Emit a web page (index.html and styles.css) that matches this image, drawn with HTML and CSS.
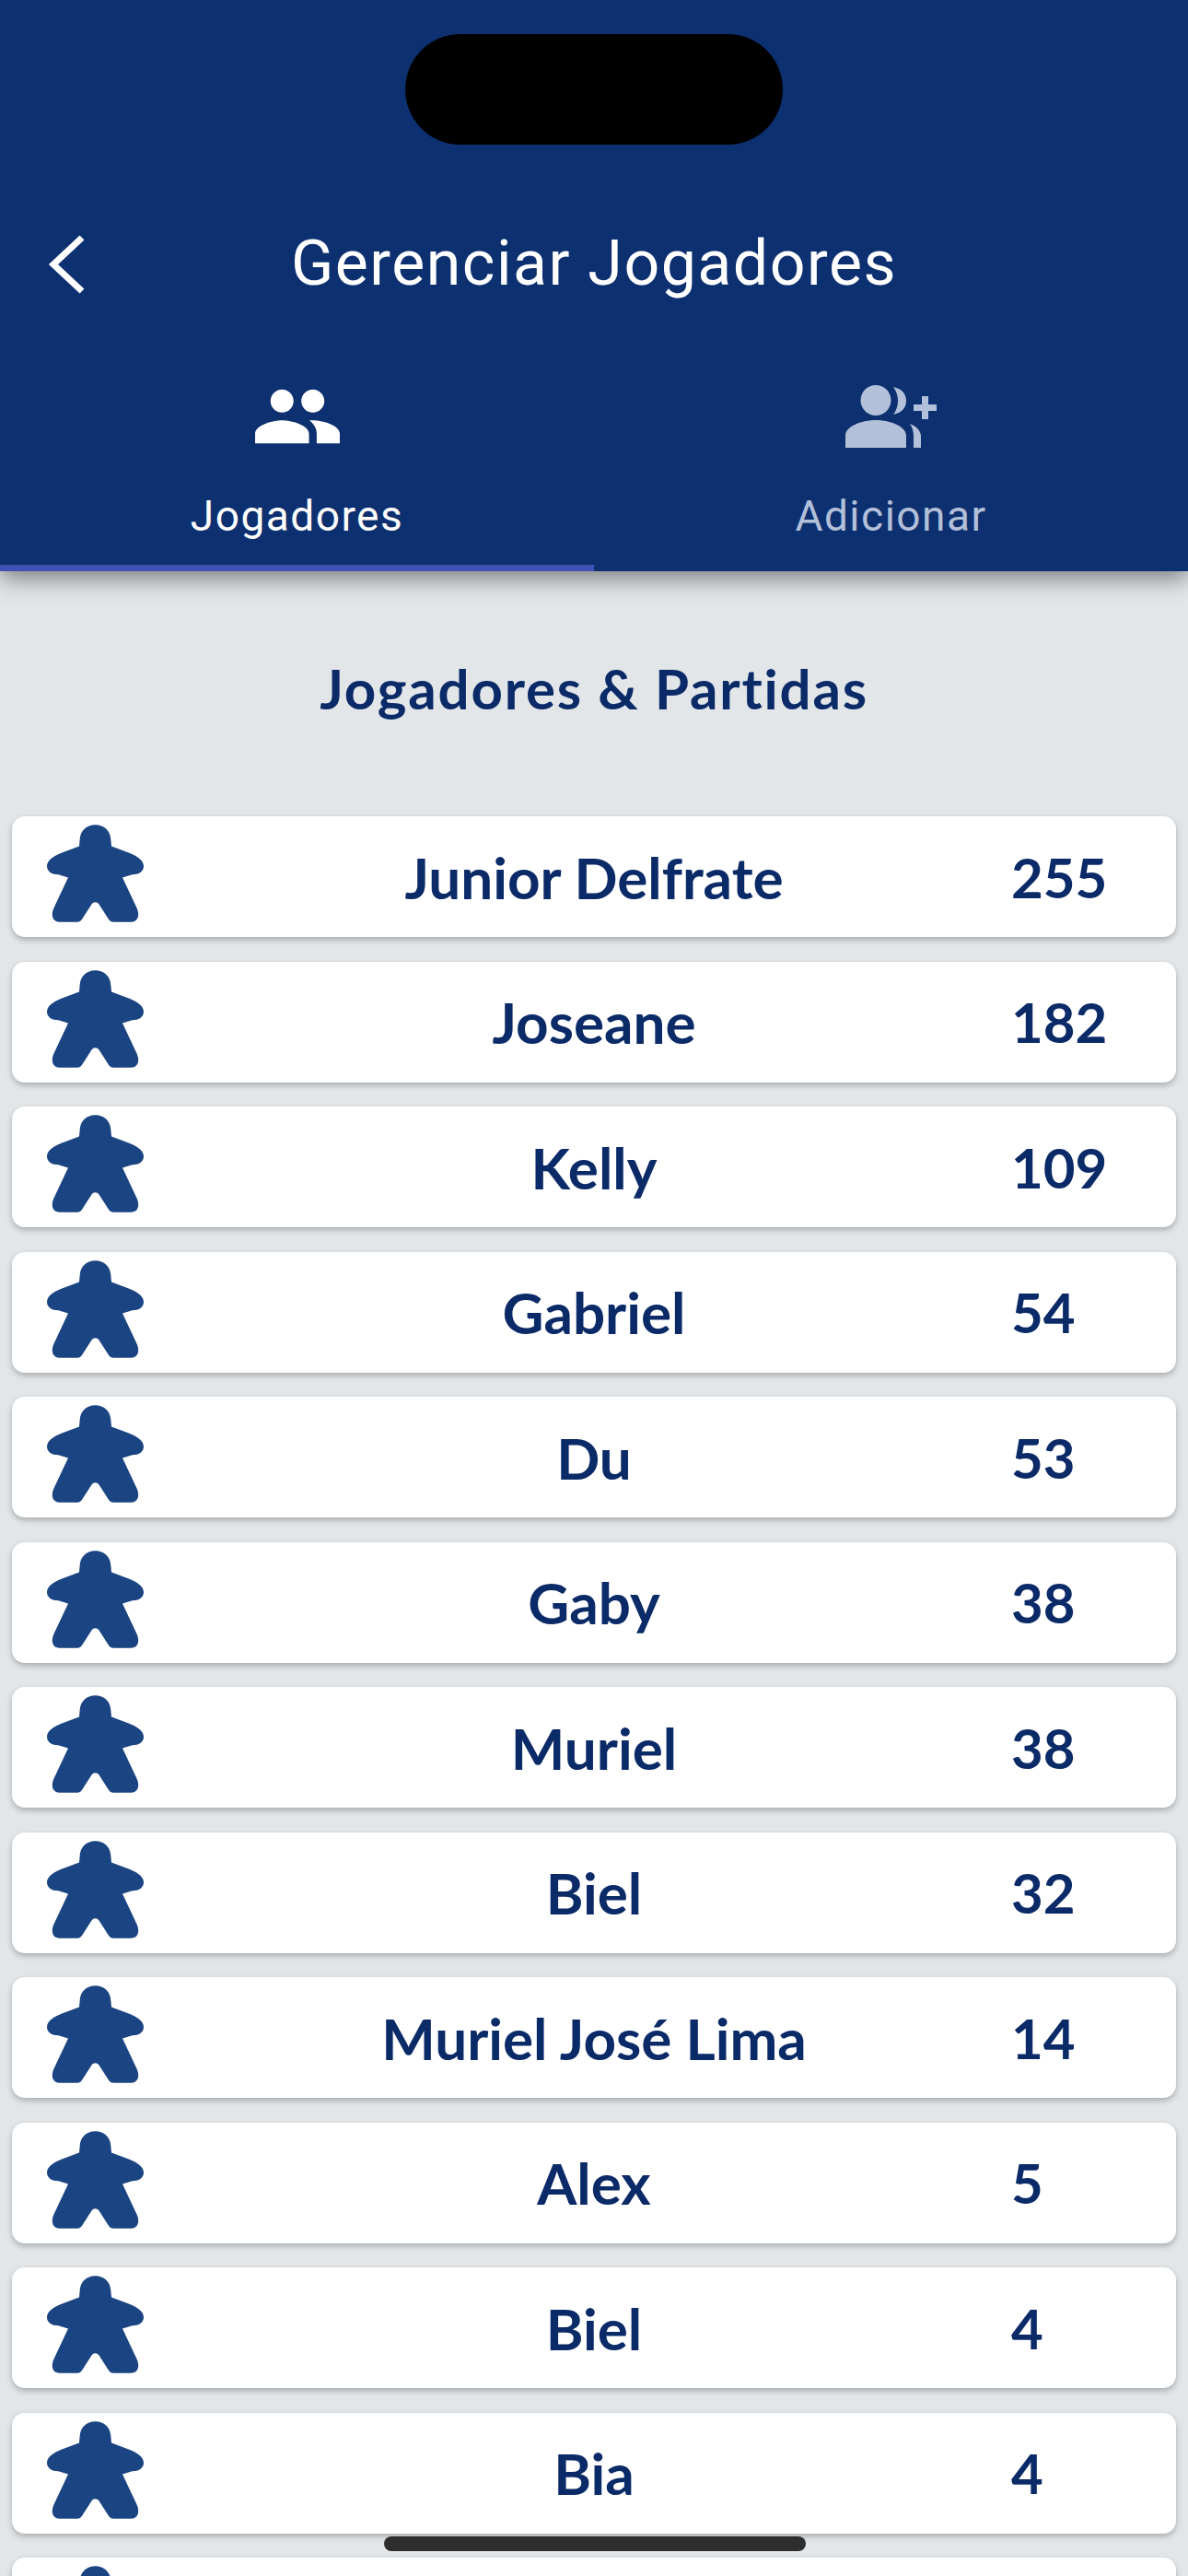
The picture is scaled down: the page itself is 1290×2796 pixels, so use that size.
FILE: index.html
```html
<!DOCTYPE html>
<html lang="pt-BR">
<head>
  <meta charset="UTF-8">
  <meta name="viewport" content="width=device-width, initial-scale=1.0">
  <title>Gerenciar Jogadores</title>
  <link rel="stylesheet" href="styles.css">
</head>
<body>
  <svg class="defs" width="0" height="0">
    <symbol id="meeple" viewBox="0 0 315 317">
      <path d="M157.5 0C129 0 108 20 107 48L105 70 47 92C18 103 0 118 0 135 0 152 16 162 37 162L69 172 22 272C12 295 18 317 42 317H97C108 317 113 311 118 302L146 258C151 250 164 250 169 258L197 302C202 311 207 317 218 317H273C297 317 303 295 293 272L246 172 278 162C299 162 315 152 315 135 315 118 297 103 268 92L210 70 208 48C207 20 186 0 157.5 0Z"/>
    </symbol>
  </svg>

  <header class="topbar">
    <div class="island"></div>
    <div class="nav">
      <svg class="back" viewBox="0 0 44 64"><path d="M40 3 9 32l31 29"/></svg>
      <h1>Gerenciar Jogadores</h1>
    </div>
    <div class="tabs">
      <div class="tab active">
        <svg viewBox="0.05 3.87 23.9 16.27"><path d="M16 11c1.66 0 2.99-1.34 2.99-3S17.66 5 16 5c-1.66 0-3 1.34-3 3s1.34 3 3 3zm-8 0c1.66 0 2.99-1.34 2.99-3S9.66 5 8 5C6.34 5 5 6.34 5 8s1.34 3 3 3zm0 2c-2.33 0-7 1.17-7 3.5V19h14v-2.500c0-2.33-4.67-3.5-7-3.5zm8 0c-.29 0-.62.02-.97.05 1.16.84 1.97 1.97 1.97 3.45V19h6v-2.5c0-2.33-4.67-3.5-7-3.5z"/></svg>
        <span>Jogadores</span>
      </div>
      <div class="tab">
        <svg viewBox="0 0 100 68"><path d="M33 0a16.500 16.500 0 1 1 0 33 16.500 16.500 0 0 1 0-33zM52 2c9 2 14 7 14 15s-5 13-14 15c3-4 5-9 5-15S55 6 52 2zM33 38c14 0 33 6 33 17v13H0V55c0-11 19-17 33-17zM70 42c8 3 12 8 12 14v12H74V56c0-5-1-10-4-14zM83 12h7v9h9v7h-9v9h-7v-9h-9v-7h9z"/></svg>
        <span>Adicionar</span>
      </div>
    </div>
  </header>

  <main class="content">
    <h2>Jogadores &amp; Partidas</h2>
    <ul class="players">
      <li class="player"><svg class="meeple"><use href="#meeple"/></svg><span class="name">Junior Delfrate</span><span class="count">255</span></li>
      <li class="player"><svg class="meeple"><use href="#meeple"/></svg><span class="name">Joseane</span><span class="count">182</span></li>
      <li class="player"><svg class="meeple"><use href="#meeple"/></svg><span class="name">Kelly</span><span class="count">109</span></li>
      <li class="player"><svg class="meeple"><use href="#meeple"/></svg><span class="name">Gabriel</span><span class="count">54</span></li>
      <li class="player"><svg class="meeple"><use href="#meeple"/></svg><span class="name">Du</span><span class="count">53</span></li>
      <li class="player"><svg class="meeple"><use href="#meeple"/></svg><span class="name">Gaby</span><span class="count">38</span></li>
      <li class="player"><svg class="meeple"><use href="#meeple"/></svg><span class="name">Muriel</span><span class="count">38</span></li>
      <li class="player"><svg class="meeple"><use href="#meeple"/></svg><span class="name">Biel</span><span class="count">32</span></li>
      <li class="player"><svg class="meeple"><use href="#meeple"/></svg><span class="name">Muriel José Lima</span><span class="count">14</span></li>
      <li class="player"><svg class="meeple"><use href="#meeple"/></svg><span class="name">Alex</span><span class="count">5</span></li>
      <li class="player"><svg class="meeple"><use href="#meeple"/></svg><span class="name">Biel</span><span class="count">4</span></li>
      <li class="player"><svg class="meeple"><use href="#meeple"/></svg><span class="name">Bia</span><span class="count">4</span></li>
      <li class="player"><svg class="meeple"><use href="#meeple"/></svg></li>
    </ul>
  </main>

  <div class="home-bar"></div>
</body>
</html>
```
FILE: styles.css
```css
html, body {
  height: 2796px;
  margin: 0;
  overflow: hidden;
}
body {
  position: relative;
  background: #e2e6e9;
  font-family: 'Lato', sans-serif;
  color: #0b2a68;
}
.defs {
  position: absolute;
}
.island {
  position: absolute;
  top: 37px;
  left: 440px;
  width: 410px;
  height: 120px;
  background: #000;
  border-radius: 60px;
}
.home-bar {
  position: absolute;
  top: 2753px;
  left: 417px;
  width: 458px;
  height: 16px;
  background: #2e2e2e;
  border-radius: 8px;
}
.topbar {
  position: relative;
  height: 620px;
  box-sizing: border-box;
  padding-top: 220px;
  background: #0d3070;
  box-shadow: 0 8px 24px rgba(0, 0, 0, 0.45);
}
.nav {
  position: relative;
  height: 132px;
  display: flex;
  align-items: center;
  justify-content: center;
}
.back {
  position: absolute;
  left: 49px;
  top: 35px;
  width: 44px;
  height: 64px;
  fill: none;
  stroke: #fff;
  stroke-width: 7;
}
.nav h1 {
  margin: 0;
  font-family: 'Roboto', sans-serif;
  font-size: 68px;
  font-weight: 400;
  letter-spacing: 1.5px;
  color: #fff;
}
.tabs {
  display: flex;
  height: 268px;
}
.tab {
  flex: 1;
  box-sizing: border-box;
  padding-top: 66px;
  display: flex;
  flex-direction: column;
  align-items: center;
  font-family: 'Roboto', sans-serif;
  font-size: 46px;
  letter-spacing: 1.5px;
  color: #b3c0d9;
}
.tab svg {
  height: 68px;
  width: 100px;
  fill: currentColor;
}
.tab span {
  margin-top: 47px;
}
.tab.active {
  color: #fff;
  border-bottom: 7px solid #3f51b5;
}
.content h2 {
  margin: 0;
  padding: 92px 0 103px;
  text-align: center;
  font-size: 60px;
  line-height: 71px;
  letter-spacing: 1.8px;
  font-weight: 700;
}
.players {
  list-style: none;
  margin: 0;
  padding: 0 13px;
  display: flex;
  flex-direction: column;
  gap: 26.5px;
}
.player {
  position: relative;
  height: 131px;
  flex: none;
  display: flex;
  align-items: center;
  justify-content: center;
  background: #fff;
  border-radius: 14px;
  box-shadow: 0 3px 6px rgba(0, 0, 0, 0.25);
  font-size: 62px;
  font-weight: 700;
}
.meeple {
  position: absolute;
  left: 38px;
  top: 9px;
  width: 105px;
  height: 106px;
  fill: #1a4482;
}
.count {
  position: absolute;
  left: 1085px;
  font-size: 60px;
}
```
